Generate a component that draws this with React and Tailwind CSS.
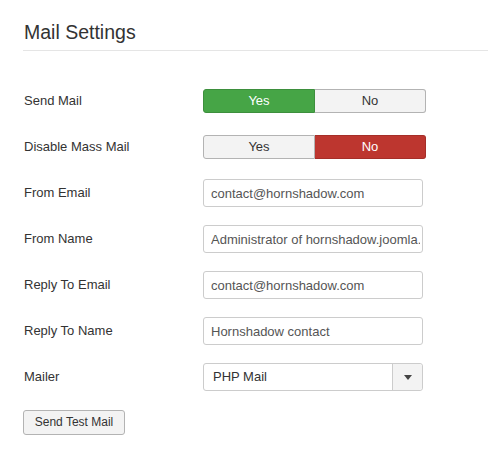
import React from 'react';

function Toggle({ value }) {
    const yesOn = value === 'yes';
    return (
        <div className="flex w-[223px] h-[24px] text-[13px]">
            <div
                className={`flex-1 flex items-center justify-center rounded-l-[3px] border ${
                    yesOn ? 'bg-[#46a546] border-[#3d8f3d] text-white' : 'bg-[#f3f3f3] border-[#b3b3b3] text-[#333]'
                }`}
            >
                Yes
            </div>
            <div
                className={`flex-1 flex items-center justify-center rounded-r-[3px] border border-l-0 ${
                    !yesOn ? 'bg-[#bd362f] border-[#a52e28] text-white' : 'bg-[#f3f3f3] border-[#b3b3b3] text-[#333]'
                }`}
            >
                No
            </div>
        </div>
    );
}

function TextField({ value }) {
    return (
        <input
            type="text"
            readOnly
            value={value}
            className="w-[220px] h-[28px] border border-[#ccc] rounded-[3px] bg-white pl-[7px] pr-[2px] text-[13px] text-[#555] outline-none font-['Liberation_Sans',Arial,sans-serif]"
        />
    );
}

function Row({ label, children }) {
    return (
        <div className="flex items-center h-[46px]">
            <div className="w-[180px] pl-px text-[13px] text-[#333]">{label}</div>
            {children}
        </div>
    );
}

export default function App() {
    return (
        <div className="bg-white w-[488px] h-[456px] pl-[23px] font-['Liberation_Sans',Arial,sans-serif]">
            <div className="pt-[20px] pb-[6px] border-b border-[#e5e5e5]">
                <h2 className="text-[19.5px] leading-[24px] text-[#333] pl-px">Mail Settings</h2>
            </div>

            <div className="mt-[27px]">
                <Row label="Send Mail">
                    <Toggle value="yes" />
                </Row>
                <Row label="Disable Mass Mail">
                    <Toggle value="no" />
                </Row>
                <Row label="From Email">
                    <TextField value="contact@hornshadow.com" />
                </Row>
                <Row label="From Name">
                    <TextField value="Administrator of hornshadow.joomla.com" />
                </Row>
                <Row label="Reply To Email">
                    <TextField value="contact@hornshadow.com" />
                </Row>
                <Row label="Reply To Name">
                    <TextField value="Hornshadow contact" />
                </Row>
                <Row label="Mailer">
                    <div className="w-[220px] h-[28px] border border-[#ccc] rounded-[3px] bg-white flex text-[13px] text-[#333]">
                        <div className="flex-1 flex items-center pl-[9px]">PHP Mail</div>
                        <div className="w-[30px] border-l border-[#ccc] bg-[#f3f3f3] rounded-r-[3px] flex items-center justify-center">
                            <svg width="8" height="5" viewBox="0 0 8 5">
                                <path d="M0 0 L8 0 L4 5 Z" fill="#444" />
                            </svg>
                        </div>
                    </div>
                </Row>
            </div>

            <div className="mt-[9px]">
                <button className="w-[102px] h-[25px] border border-[#b3b3b3] rounded-[3px] bg-[#f3f3f3] text-[12px] text-[#333]">
                    Send Test Mail
                </button>
            </div>
        </div>
    );
}
